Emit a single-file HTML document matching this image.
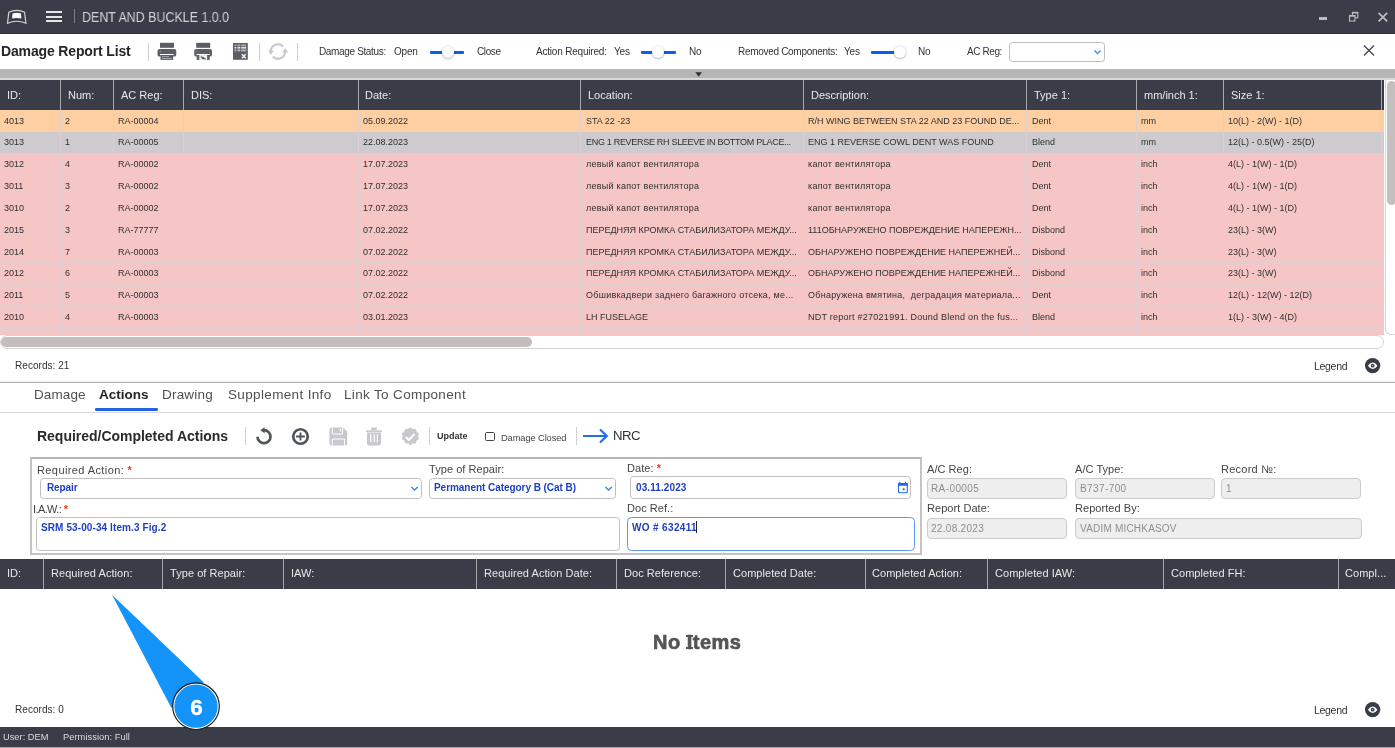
<!DOCTYPE html><html><head><meta charset="utf-8"><style>
*{box-sizing:border-box;margin:0;padding:0}
html,body{width:1395px;height:748px;overflow:hidden;background:#fff;font-family:"Liberation Sans",sans-serif;color:#333}
.a,.hc,.c,.lbl{will-change:transform}
.a{position:absolute;white-space:nowrap}
svg{position:absolute;overflow:visible}
.hc{position:absolute;height:30px;line-height:30px;font-size:11px;color:#e8e8e8;white-space:nowrap}
.hd{position:absolute;width:1px;background:#a9a6ab}
.c{position:absolute;font-size:9px;color:#2f2f2f;white-space:nowrap;line-height:12px}
.lbl{position:absolute;font-size:11px;color:#444;white-space:nowrap;line-height:13px}
.st{color:#f03a17;font-weight:bold}
</style></head><body>
<div class="a" style="left:0;top:0;width:1395px;height:34px;background:#3a3d47"></div>
<div class="a" style="left:0;top:33px;width:1395px;height:1px;background:#2d2f37"></div>
<svg style="left:0;top:0" width="40" height="33"><path d="M7.5 23.3 L8.8 12.3 Q16.7 8.4 24.6 12.3 L25.9 23.3 Q16.7 19.2 7.5 23.3Z" fill="none" stroke="#d6d6d6" stroke-width="1.2"/><path d="M12 18.4 L12.5 13.6 Q16.7 12 21 13.6 L21.4 18.4 Q16.7 17.4 12 18.4Z" fill="#fafafa"/></svg>
<div class="a" style="left:46px;top:11px;width:16px;height:2px;background:#e6e6e6"></div>
<div class="a" style="left:46px;top:15.5px;width:16px;height:2px;background:#e6e6e6"></div>
<div class="a" style="left:46px;top:20px;width:16px;height:2px;background:#e6e6e6"></div>
<div class="a" style="left:74px;top:9px;width:1px;height:14px;background:#7a7c84"></div>
<div class="a" style="left:82.3px;top:8.5px;font-size:14.5px;line-height:17px;color:#cfd0d3;transform:scaleX(0.858);transform-origin:0 0">DENT AND BUCKLE 1.0.0</div>
<div class="a" style="left:1319px;top:17px;width:8px;height:3px;background:#bdbdbd"></div>
<svg style="left:1345px;top:8px" width="18" height="18"><rect x="7.4" y="4.4" width="5.4" height="5.4" fill="none" stroke="#bdbdbd" stroke-width="1.1"/><rect x="7" y="4" width="6.2" height="1.5" fill="#bdbdbd"/><rect x="4.5" y="7.6" width="5.4" height="5.4" fill="#3a3d47" stroke="#bdbdbd" stroke-width="1.1"/><rect x="4" y="7.2" width="6.4" height="1.5" fill="#bdbdbd"/></svg>
<svg style="left:1375px;top:8.5px" width="16" height="16"><path d="M3.6 3.9 L12.2 12.3 M12.2 3.9 L3.6 12.3" stroke="#bdbdbd" stroke-width="1.7"/></svg>
<div class="a" style="left:1px;top:41px;font-size:14px;font-weight:bold;line-height:20px;color:#262626;letter-spacing:-0.15px">Damage Report List</div>
<div class="a" style="left:148px;top:43px;width:1px;height:18px;background:#d0d0d4"></div>
<div class="a" style="left:259px;top:43px;width:1px;height:18px;background:#d0d0d4"></div>
<div class="a" style="left:296.5px;top:43px;width:1px;height:18px;background:#d0d0d4"></div>
<svg style="left:157px;top:42px" width="22" height="20"><rect x="3" y="0.8" width="14" height="5" fill="#5b5e66"/><rect x="0.5" y="6.9" width="18.8" height="7.7" rx="2.2" fill="#5b5e66"/><rect x="3" y="12" width="13.5" height="1.1" fill="#fff"/><rect x="3.5" y="13.1" width="12.7" height="4.8" fill="#5b5e66"/><rect x="5" y="14.3" width="7" height="0.8" fill="#b4b4b8"/><rect x="5" y="16.2" width="10" height="0.8" fill="#b4b4b8"/><rect x="2.6" y="8.8" width="1.4" height="0.8" fill="#9a9ca2"/></svg>
<svg style="left:194px;top:42px" width="22" height="20"><rect x="2.2" y="0.8" width="14" height="5" fill="#5b5e66"/><rect x="0.2" y="6.9" width="17.8" height="7.7" rx="2.2" fill="#5b5e66"/><rect x="2.5" y="12" width="13.3" height="1.1" fill="#fff"/><rect x="2.7" y="13.1" width="13" height="4.8" fill="#5b5e66"/><rect x="5.3" y="13.1" width="7.8" height="4.8" fill="#f4f4f6"/><path d="M6.3 14 L10.5 15.5 L12.5 17.5 L8 17 Z" fill="#5b5e66"/><rect x="2.2" y="8.8" width="1.4" height="0.8" fill="#9a9ca2"/></svg>
<svg style="left:232px;top:42px" width="18" height="20"><rect x="1" y="1" width="14.8" height="16.8" fill="#5b5e66"/><rect x="2.5" y="2.4" width="1.8" height="1.8" fill="#a9abb0"/><rect x="5.3" y="2.4" width="3.0" height="1.8" fill="#a9abb0"/><rect x="9.2" y="2.4" width="5.0" height="1.8" fill="#a9abb0"/><rect x="2.5" y="4.9" width="1.8" height="1.7" fill="#dedfe2"/><rect x="5.3" y="4.9" width="3.0" height="1.7" fill="#dedfe2"/><rect x="9.2" y="4.9" width="5.0" height="1.7" fill="#dedfe2"/><rect x="2.5" y="7.4" width="1.8" height="2.0" fill="#b4b6bb"/><rect x="5.3" y="7.4" width="3.0" height="2.0" fill="#b4b6bb"/><rect x="9.2" y="7.4" width="5.0" height="2.0" fill="#b4b6bb"/><path d="M9.8 12.3 L13.8 16.3 M13.6 12.3 L10 16.3" stroke="#f0f0f2" stroke-width="1.5"/></svg>
<svg style="left:267px;top:42px" width="22" height="20"><path d="M16.1 4.4 A7.2 7.2 0 0 0 3.8 9.2" fill="none" stroke="#c9c9cf" stroke-width="2.2"/><path d="M5.9 14.6 A7.2 7.2 0 0 0 18.2 9.8" fill="none" stroke="#c9c9cf" stroke-width="2.2"/><path d="M0.9 8.6 L6.9 8.6 L3.9 12.9Z" fill="#c9c9cf"/><path d="M15.2 10.4 L21.2 10.4 L18.2 6.1Z" fill="#c9c9cf"/></svg>
<div class="a" style="left:319.3px;top:46.3px;font-size:10px;line-height:12px;color:#333;letter-spacing:-0.35px">Damage Status:</div>
<div class="a" style="left:393.9px;top:46.3px;font-size:10px;line-height:12px;color:#333;letter-spacing:-0.2px">Open</div>
<div class="a" style="left:430.4px;top:50.5px;width:34.400000000000034px;height:2.7px;background:#0b5cf0;border-radius:1px"></div><div class="a" style="left:441.55px;top:46.05px;width:11.5px;height:11.5px;border-radius:50%;background:#fdfcfe;box-shadow:0 0.6px 2px rgba(0,0,0,0.38)"></div>
<div class="a" style="left:477px;top:46.3px;font-size:10px;line-height:12px;color:#333;letter-spacing:-0.4px">Close</div>
<div class="a" style="left:535.8px;top:46.3px;font-size:10px;line-height:12px;color:#333;letter-spacing:-0.2px">Action Required:</div>
<div class="a" style="left:613.9px;top:46.3px;font-size:10px;line-height:12px;color:#333;letter-spacing:-0.2px">Yes</div>
<div class="a" style="left:641.1px;top:50.5px;width:34.5px;height:2.7px;background:#0b5cf0;border-radius:1px"></div><div class="a" style="left:652.15px;top:46.05px;width:11.5px;height:11.5px;border-radius:50%;background:#fdfcfe;box-shadow:0 0.6px 2px rgba(0,0,0,0.38)"></div>
<div class="a" style="left:688.5px;top:46.3px;font-size:10px;line-height:12px;color:#333;letter-spacing:-0.2px">No</div>
<div class="a" style="left:737.5px;top:46.3px;font-size:10px;line-height:12px;color:#333;letter-spacing:-0.3px">Removed Components:</div>
<div class="a" style="left:844.4px;top:46.3px;font-size:10px;line-height:12px;color:#333;letter-spacing:-0.2px">Yes</div>
<div class="a" style="left:871.2px;top:50.5px;width:25.799999999999955px;height:2.7px;background:#0b5cf0;border-radius:1px"></div><div class="a" style="left:893.85px;top:46.05px;width:11.5px;height:11.5px;border-radius:50%;background:#fdfcfe;box-shadow:0 0.6px 2px rgba(0,0,0,0.38)"></div>
<div class="a" style="left:918.3px;top:46.3px;font-size:10px;line-height:12px;color:#333;letter-spacing:-0.2px">No</div>
<div class="a" style="left:967px;top:46.3px;font-size:10px;line-height:12px;color:#333;letter-spacing:-0.4px">AC Reg:</div>
<div class="a" style="left:1009px;top:42px;width:96px;height:20px;border:1px solid #c2bbbb;border-radius:3.5px;background:#fff"></div>
<svg style="left:1093px;top:48px" width="10" height="8"><path d="M1.5 2.5 L4.5 5.6 L7.5 2.5" fill="none" stroke="#3f80ee" stroke-width="1.3"/></svg>
<svg style="left:1361px;top:43px" width="16" height="16"><path d="M3 2.5 L13 12.5 M13 2.5 L3 12.5" stroke="#4a4a4a" stroke-width="1.4"/></svg>
<div class="a" style="left:0;top:69px;width:1395px;height:9px;background:#b6b6b6"></div>
<div class="a" style="left:0;top:78px;width:1395px;height:2px;background:#ddd8d8"></div>
<svg style="left:694px;top:71px" width="10" height="8"><path d="M1.3 1.3 L8 1.3 L4.65 5.8Z" fill="#333"/></svg>
<div class="a" style="left:0;top:80px;width:1384px;height:30px;background:#3a3d47"></div>
<div class="hc" style="left:6.9px;top:80px">ID:</div>
<div class="hd" style="left:60px;top:80px;height:30px"></div>
<div class="hc" style="left:67.8px;top:80px">Num:</div>
<div class="hd" style="left:113px;top:80px;height:30px"></div>
<div class="hc" style="left:120.8px;top:80px">AC Reg:</div>
<div class="hd" style="left:182.8px;top:80px;height:30px"></div>
<div class="hc" style="left:190.60000000000002px;top:80px">DIS:</div>
<div class="hd" style="left:357.5px;top:80px;height:30px"></div>
<div class="hc" style="left:365.3px;top:80px">Date:</div>
<div class="hd" style="left:580.4px;top:80px;height:30px"></div>
<div class="hc" style="left:588.1999999999999px;top:80px">Location:</div>
<div class="hd" style="left:803px;top:80px;height:30px"></div>
<div class="hc" style="left:810.8px;top:80px">Description:</div>
<div class="hd" style="left:1026.3px;top:80px;height:30px"></div>
<div class="hc" style="left:1034.1px;top:80px">Type 1:</div>
<div class="hd" style="left:1135.8px;top:80px;height:30px"></div>
<div class="hc" style="left:1143.6px;top:80px">mm/inch 1:</div>
<div class="hd" style="left:1223.2px;top:80px;height:30px"></div>
<div class="hc" style="left:1231.0px;top:80px">Size 1:</div>
<div class="hd" style="left:1380.8px;top:80px;height:30px"></div>
<div class="a" style="left:0;top:328.4px;width:1384px;height:6.600000000000023px;background:#f6c6c6"></div>
<div class="a" style="left:0;top:110.0px;width:1384px;height:21.84px;background:#fecfa3"></div>
<div class="a" style="left:0;top:131.84px;width:1384px;height:21.84px;background:#cdcbce"></div>
<div class="a" style="left:0;top:153.68px;width:1384px;height:21.84px;background:#f6c6c6"></div>
<div class="a" style="left:0;top:175.51999999999998px;width:1384px;height:21.84px;background:#f6c6c6"></div>
<div class="a" style="left:0;top:197.36px;width:1384px;height:21.84px;background:#f6c6c6"></div>
<div class="a" style="left:0;top:219.2px;width:1384px;height:21.84px;background:#f6c6c6"></div>
<div class="a" style="left:0;top:241.04px;width:1384px;height:21.84px;background:#f6c6c6"></div>
<div class="a" style="left:0;top:262.88px;width:1384px;height:21.84px;background:#f6c6c6"></div>
<div class="a" style="left:0;top:284.72px;width:1384px;height:21.84px;background:#f6c6c6"></div>
<div class="a" style="left:0;top:306.56px;width:1384px;height:21.84px;background:#f6c6c6"></div>
<div class="a" style="left:0;top:153.18px;width:1384px;height:1px;background:#ddcfd0"></div>
<div class="a" style="left:0;top:175.01999999999998px;width:1384px;height:1px;background:#ddcfd0"></div>
<div class="a" style="left:0;top:196.86px;width:1384px;height:1px;background:#ddcfd0"></div>
<div class="a" style="left:0;top:218.7px;width:1384px;height:1px;background:#ddcfd0"></div>
<div class="a" style="left:0;top:240.54px;width:1384px;height:1px;background:#ddcfd0"></div>
<div class="a" style="left:0;top:262.38px;width:1384px;height:1px;background:#ddcfd0"></div>
<div class="a" style="left:0;top:284.22px;width:1384px;height:1px;background:#ddcfd0"></div>
<div class="a" style="left:0;top:306.06px;width:1384px;height:1px;background:#ddcfd0"></div>
<div class="a" style="left:0;top:327.9px;width:1384px;height:1px;background:#ddcfd0"></div>
<div class="a" style="left:60px;top:110px;width:1px;height:224.8px;background:#dcd0d1"></div>
<div class="a" style="left:113px;top:110px;width:1px;height:224.8px;background:#dcd0d1"></div>
<div class="a" style="left:182.8px;top:110px;width:1px;height:224.8px;background:#dcd0d1"></div>
<div class="a" style="left:357.5px;top:110px;width:1px;height:224.8px;background:#dcd0d1"></div>
<div class="a" style="left:580.4px;top:110px;width:1px;height:224.8px;background:#dcd0d1"></div>
<div class="a" style="left:803px;top:110px;width:1px;height:224.8px;background:#dcd0d1"></div>
<div class="a" style="left:1026.3px;top:110px;width:1px;height:224.8px;background:#dcd0d1"></div>
<div class="a" style="left:1135.8px;top:110px;width:1px;height:224.8px;background:#dcd0d1"></div>
<div class="a" style="left:1223.2px;top:110px;width:1px;height:224.8px;background:#dcd0d1"></div>
<div class="a" style="left:1380.8px;top:110px;width:1px;height:224.8px;background:#dcd0d1"></div>
<div class="c" style="left:4px;top:114.5px;">4013</div>
<div class="c" style="left:65.2px;top:114.5px;">2</div>
<div class="c" style="left:118.2px;top:114.5px;">RA-00004</div>
<div class="c" style="left:362.7px;top:114.5px;">05.09.2022</div>
<div class="c" style="left:585.6px;top:114.5px;">STA 22 -23</div>
<div class="c" style="left:808.2px;top:114.5px;">R/H WING BETWEEN STA 22 AND 23 FOUND DE...</div>
<div class="c" style="left:1031.5px;top:114.5px;">Dent</div>
<div class="c" style="left:1141.0px;top:114.5px;">mm</div>
<div class="c" style="left:1228.4px;top:114.5px;">10(L) - 2(W) - 1(D)</div>
<div class="c" style="left:4px;top:136.34px;">3013</div>
<div class="c" style="left:65.2px;top:136.34px;">1</div>
<div class="c" style="left:118.2px;top:136.34px;">RA-00005</div>
<div class="c" style="left:362.7px;top:136.34px;">22.08.2023</div>
<div class="c" style="left:585.6px;top:136.34px;letter-spacing:-0.3px;">ENG 1 REVERSE RH SLEEVE IN BOTTOM PLACE...</div>
<div class="c" style="left:808.2px;top:136.34px;">ENG 1 REVERSE COWL DENT WAS FOUND</div>
<div class="c" style="left:1031.5px;top:136.34px;">Blend</div>
<div class="c" style="left:1141.0px;top:136.34px;">mm</div>
<div class="c" style="left:1228.4px;top:136.34px;">12(L) - 0.5(W) - 25(D)</div>
<div class="c" style="left:4px;top:158.18px;">3012</div>
<div class="c" style="left:65.2px;top:158.18px;">4</div>
<div class="c" style="left:118.2px;top:158.18px;">RA-00002</div>
<div class="c" style="left:362.7px;top:158.18px;">17.07.2023</div>
<div class="c" style="left:585.6px;top:158.18px;letter-spacing:0.25px;">левый капот вентилятора</div>
<div class="c" style="left:808.2px;top:158.18px;letter-spacing:0.25px;">капот вентилятора</div>
<div class="c" style="left:1031.5px;top:158.18px;">Dent</div>
<div class="c" style="left:1141.0px;top:158.18px;">inch</div>
<div class="c" style="left:1228.4px;top:158.18px;">4(L) - 1(W) - 1(D)</div>
<div class="c" style="left:4px;top:180.01999999999998px;">3011</div>
<div class="c" style="left:65.2px;top:180.01999999999998px;">3</div>
<div class="c" style="left:118.2px;top:180.01999999999998px;">RA-00002</div>
<div class="c" style="left:362.7px;top:180.01999999999998px;">17.07.2023</div>
<div class="c" style="left:585.6px;top:180.01999999999998px;letter-spacing:0.25px;">левый капот вентилятора</div>
<div class="c" style="left:808.2px;top:180.01999999999998px;letter-spacing:0.25px;">капот вентилятора</div>
<div class="c" style="left:1031.5px;top:180.01999999999998px;">Dent</div>
<div class="c" style="left:1141.0px;top:180.01999999999998px;">inch</div>
<div class="c" style="left:1228.4px;top:180.01999999999998px;">4(L) - 1(W) - 1(D)</div>
<div class="c" style="left:4px;top:201.86px;">3010</div>
<div class="c" style="left:65.2px;top:201.86px;">2</div>
<div class="c" style="left:118.2px;top:201.86px;">RA-00002</div>
<div class="c" style="left:362.7px;top:201.86px;">17.07.2023</div>
<div class="c" style="left:585.6px;top:201.86px;letter-spacing:0.25px;">левый капот вентилятора</div>
<div class="c" style="left:808.2px;top:201.86px;letter-spacing:0.25px;">капот вентилятора</div>
<div class="c" style="left:1031.5px;top:201.86px;">Dent</div>
<div class="c" style="left:1141.0px;top:201.86px;">inch</div>
<div class="c" style="left:1228.4px;top:201.86px;">4(L) - 1(W) - 1(D)</div>
<div class="c" style="left:4px;top:223.7px;">2015</div>
<div class="c" style="left:65.2px;top:223.7px;">3</div>
<div class="c" style="left:118.2px;top:223.7px;">RA-77777</div>
<div class="c" style="left:362.7px;top:223.7px;">07.02.2022</div>
<div class="c" style="left:585.6px;top:223.7px;">ПЕРЕДНЯЯ КРОМКА СТАБИЛИЗАТОРА МЕЖДУ...</div>
<div class="c" style="left:808.2px;top:223.7px;">111ОБНАРУЖЕНО ПОВРЕЖДЕНИЕ НАПЕРЕЖН...</div>
<div class="c" style="left:1031.5px;top:223.7px;">Disbond</div>
<div class="c" style="left:1141.0px;top:223.7px;">inch</div>
<div class="c" style="left:1228.4px;top:223.7px;">23(L) - 3(W)</div>
<div class="c" style="left:4px;top:245.54px;">2014</div>
<div class="c" style="left:65.2px;top:245.54px;">7</div>
<div class="c" style="left:118.2px;top:245.54px;">RA-00003</div>
<div class="c" style="left:362.7px;top:245.54px;">07.02.2022</div>
<div class="c" style="left:585.6px;top:245.54px;">ПЕРЕДНЯЯ КРОМКА СТАБИЛИЗАТОРА МЕЖДУ...</div>
<div class="c" style="left:808.2px;top:245.54px;">ОБНАРУЖЕНО ПОВРЕЖДЕНИЕ НАПЕРЕЖНЕЙ...</div>
<div class="c" style="left:1031.5px;top:245.54px;">Disbond</div>
<div class="c" style="left:1141.0px;top:245.54px;">inch</div>
<div class="c" style="left:1228.4px;top:245.54px;">23(L) - 3(W)</div>
<div class="c" style="left:4px;top:267.38px;">2012</div>
<div class="c" style="left:65.2px;top:267.38px;">6</div>
<div class="c" style="left:118.2px;top:267.38px;">RA-00003</div>
<div class="c" style="left:362.7px;top:267.38px;">07.02.2022</div>
<div class="c" style="left:585.6px;top:267.38px;">ПЕРЕДНЯЯ КРОМКА СТАБИЛИЗАТОРА МЕЖДУ...</div>
<div class="c" style="left:808.2px;top:267.38px;">ОБНАРУЖЕНО ПОВРЕЖДЕНИЕ НАПЕРЕЖНЕЙ...</div>
<div class="c" style="left:1031.5px;top:267.38px;">Disbond</div>
<div class="c" style="left:1141.0px;top:267.38px;">inch</div>
<div class="c" style="left:1228.4px;top:267.38px;">23(L) - 3(W)</div>
<div class="c" style="left:4px;top:289.22px;">2011</div>
<div class="c" style="left:65.2px;top:289.22px;">5</div>
<div class="c" style="left:118.2px;top:289.22px;">RA-00003</div>
<div class="c" style="left:362.7px;top:289.22px;">07.02.2022</div>
<div class="c" style="left:585.6px;top:289.22px;letter-spacing:0.25px;">Обшивкадвери заднего багажного отсека, ме...</div>
<div class="c" style="left:808.2px;top:289.22px;letter-spacing:0.25px;">Обнаружена вмятина,&nbsp; деградация материала...</div>
<div class="c" style="left:1031.5px;top:289.22px;">Dent</div>
<div class="c" style="left:1141.0px;top:289.22px;">inch</div>
<div class="c" style="left:1228.4px;top:289.22px;">12(L) - 12(W) - 12(D)</div>
<div class="c" style="left:4px;top:311.06px;">2010</div>
<div class="c" style="left:65.2px;top:311.06px;">4</div>
<div class="c" style="left:118.2px;top:311.06px;">RA-00003</div>
<div class="c" style="left:362.7px;top:311.06px;">03.01.2023</div>
<div class="c" style="left:585.6px;top:311.06px;">LH FUSELAGE</div>
<div class="c" style="left:808.2px;top:311.06px;letter-spacing:0.25px;">NDT report #27021991. Dound Blend on the fus...</div>
<div class="c" style="left:1031.5px;top:311.06px;">Blend</div>
<div class="c" style="left:1141.0px;top:311.06px;">inch</div>
<div class="c" style="left:1228.4px;top:311.06px;">1(L) - 3(W) - 4(D)</div>
<div class="a" style="left:1385px;top:80px;width:10px;height:255px;border-left:1px solid #d8d4d4;border-bottom:1px solid #d8d4d4;border-bottom-left-radius:6px;background:#fff"></div>
<div class="a" style="left:1386.5px;top:80.6px;width:9px;height:123.5px;border-radius:4.5px;background:#c6bfbf"></div>
<div class="a" style="left:0;top:335px;width:1384px;height:14px;border:1px solid #d8d3d3;border-radius:7px;background:#fff"></div>
<div class="a" style="left:0.5px;top:336.5px;width:531px;height:10.3px;border-radius:5.15px;background:#c5bdbd"></div>
<div class="a" style="left:15px;top:359.5px;font-size:10px;line-height:12px;color:#333;letter-spacing:0.05px">Records: 21</div>
<div class="a" style="left:1313.5px;top:360.09999999999997px;font-size:10.5px;line-height:13px;color:#333;letter-spacing:-0.3px">Legend</div><svg style="left:1364px;top:356.5px" width="18" height="18"><circle cx="8.6" cy="8.6" r="7.7" fill="#3a3d47"/><path d="M3.9 8.7 Q8.7 2.1 13.5 8.7 Q8.7 15.3 3.9 8.7Z" fill="#fff"/><circle cx="8.7" cy="8.7" r="1.9" fill="#3a3d47"/><circle cx="8.7" cy="8.7" r="0.6" fill="#c8c8cc"/></svg>
<div class="a" style="left:0;top:380px;width:1395px;height:2px;background:linear-gradient(#fff,#f0eeee)"></div>
<div class="a" style="left:0;top:382px;width:1395px;height:1px;background:#b2b0b0"></div>
<div class="a" style="left:33.9px;top:387px;font-size:13.5px;line-height:16px;font-weight:400;color:#505050;letter-spacing:0.1px">Damage</div>
<div class="a" style="left:98.9px;top:387px;font-size:13.5px;line-height:16px;font-weight:700;color:#262626">Actions</div>
<div class="a" style="left:162px;top:387px;font-size:13.5px;line-height:16px;font-weight:400;color:#505050;letter-spacing:0.2px">Drawing</div>
<div class="a" style="left:227.7px;top:387px;font-size:13.5px;line-height:16px;font-weight:400;color:#505050;letter-spacing:0.35px">Supplement Info</div>
<div class="a" style="left:344.2px;top:387px;font-size:13.5px;line-height:16px;font-weight:400;color:#505050;letter-spacing:0.35px">Link To Component</div>
<div class="a" style="left:95.4px;top:408.2px;width:62.6px;height:2.6px;border-radius:1.3px;background:#2064e0"></div>
<div class="a" style="left:0;top:411.5px;width:1395px;height:1px;background:#ddd6d6"></div>
<div class="a" style="left:37.3px;top:427.7px;font-size:14px;line-height:17px;font-weight:bold;color:#2a2a2a;letter-spacing:-0.02px">Required/Completed Actions</div>
<div class="a" style="left:245px;top:427px;width:1px;height:18px;background:#d0d0d4"></div>
<div class="a" style="left:429.3px;top:427px;width:1px;height:18px;background:#d0d0d4"></div>
<div class="a" style="left:575.5px;top:427px;width:1px;height:18px;background:#d0d0d4"></div>
<svg style="left:254px;top:426px" width="20" height="20"><path d="M3.5 10.7 A6.5 6.5 0 1 0 10 4.2" fill="none" stroke="#50535b" stroke-width="2.7"/><path d="M6.3 4.2 L10.6 1.2 L10.6 7.2Z" fill="#50535b"/></svg>
<svg style="left:291px;top:426.5px" width="20" height="20"><circle cx="9.5" cy="9.5" r="7.25" fill="none" stroke="#50535b" stroke-width="2.7"/><path d="M9.5 5.5 V13.6 M5.1 9.5 H13.8" stroke="#50535b" stroke-width="1.8"/></svg>
<svg style="left:328.5px;top:426.5px" width="20" height="20"><path d="M0.5 2.5 Q0.5 0.6 2.4 0.6 L14 0.6 L18.2 4.6 L18.2 16.5 Q18.2 18.4 16.3 18.4 L2.4 18.4 Q0.5 18.4 0.5 16.5Z" fill="#c8c8cf"/><path d="M3.3 0.6 V7 H13.5 V0.6" fill="none" stroke="#fff" stroke-width="1"/><rect x="11" y="1.6" width="1" height="3" fill="#fff"/><path d="M3.3 18.4 V12 H15.5 V18.4" fill="none" stroke="#fff" stroke-width="1"/></svg>
<svg style="left:365px;top:426.5px" width="18" height="20"><rect x="1" y="3.4" width="16" height="1.6" fill="#c8c8cf"/><rect x="6.2" y="0.6" width="5.6" height="3" rx="0.5" fill="#c8c8cf"/><path d="M2 5.6 L16 5.6 L16 16.6 Q16 18.4 14.2 18.4 L3.8 18.4 Q2 18.4 2 16.6Z" fill="#c8c8cf"/><rect x="5.1" y="7.2" width="1.2" height="8" fill="#fff"/><rect x="8.6" y="7.2" width="1.2" height="8" fill="#fff"/><rect x="11.8" y="7.2" width="1.2" height="8" fill="#fff"/></svg>
<svg style="left:401px;top:426.5px" width="20" height="20"><path d="M9.40 0.90 L11.56 2.54 L14.28 2.49 L15.06 5.09 L17.29 6.64 L16.40 9.20 L17.29 11.76 L15.06 13.31 L14.28 15.91 L11.56 15.86 L9.40 17.50 L7.24 15.86 L4.52 15.91 L3.74 13.31 L1.51 11.76 L2.40 9.20 L1.51 6.64 L3.74 5.09 L4.52 2.49 L7.24 2.54Z" fill="#c8c8cf" stroke="#c8c8cf" stroke-width="1.2" stroke-linejoin="round"/><path d="M4.8 10 L8 13 L13.6 6.8" fill="none" stroke="#fff" stroke-width="2"/></svg>
<div class="a" style="left:436.6px;top:431px;font-size:9px;line-height:11px;font-weight:bold;color:#333;letter-spacing:0px">Update</div>
<div class="a" style="left:485px;top:432.4px;width:9.8px;height:9.3px;border:1.3px solid #444;border-radius:1.5px"></div>
<div class="a" style="left:500.5px;top:431.8px;font-size:9.3px;line-height:12px;color:#444;letter-spacing:-0.1px">Damage Closed</div>
<svg style="left:582px;top:428px" width="28" height="16"><path d="M1 8 H24.5 M18 1.5 L24.8 8 L18 14.5" fill="none" stroke="#1f6fe8" stroke-width="2.2"/></svg>
<div class="a" style="left:613px;top:427.8px;font-size:13.2px;line-height:15px;color:#333;letter-spacing:-0.5px">NRC</div>
<div class="a" style="left:29.5px;top:457px;width:892px;height:98px;border:2px solid #c9c2c2;border-top-color:#bdb5b5;background:#fff"></div>
<div class="lbl" style="left:37px;top:463.8px;font-size:11px;letter-spacing:0.4px">Required Action: <span class="st">*</span></div>
<div class="lbl" style="left:429.4px;top:463.0px;font-size:11px;letter-spacing:0.05px">Type of Repair:</div>
<div class="lbl" style="left:626.9px;top:462.2px;font-size:11px;letter-spacing:0.05px">Date: <span class="st">*</span></div>
<div class="lbl" style="left:33.3px;top:503.3px;font-size:11px;letter-spacing:-0.6px">I.A.W.: <span class="st">*</span></div>
<div class="lbl" style="left:626.9px;top:502.3px;font-size:11px;letter-spacing:0.05px">Doc Ref.:</div>
<div class="a" style="left:40px;top:478px;width:382px;height:21px;border:1px solid #c4bdbd;border-radius:3.5px;background:#fff"></div>
<div class="a" style="left:429px;top:478px;width:187px;height:21px;border:1px solid #c4bdbd;border-radius:3.5px;background:#fff"></div>
<div class="a" style="left:630px;top:476px;width:281px;height:23px;border:1px solid #c4bdbd;border-radius:3.5px;background:#fff"></div>
<div class="a" style="left:36px;top:517px;width:584px;height:34px;border:1px solid #c4bdbd;border-radius:3.5px;background:#fff"></div>
<div class="a" style="left:626.9px;top:517.4px;width:287.70000000000005px;height:33.80000000000007px;border:1.4px solid #5f96f3;border-radius:4.5px;background:#fff"></div>
<div class="a" style="left:46.6px;top:481.7px;font-size:10px;line-height:12px;font-weight:700;color:#1d3fc3;letter-spacing:-0.1px">Repair</div>
<div class="a" style="left:433.7px;top:481.7px;font-size:10px;line-height:12px;font-weight:700;color:#1d3fc3;letter-spacing:-0.05px">Permanent Category B (Cat B)</div>
<div class="a" style="left:636.1px;top:482.0px;font-size:10px;line-height:12px;font-weight:700;color:#1d3fc3;letter-spacing:0.1px">03.11.2023</div>
<div class="a" style="left:41px;top:521.9000000000001px;font-size:10px;line-height:12px;font-weight:700;color:#1d3fc3;letter-spacing:0.1px">SRM 53-00-34 Item.3 Fig.2</div>
<div class="a" style="left:631.5px;top:521.7px;font-size:10px;line-height:12px;font-weight:700;color:#1d3fc3;letter-spacing:0.35px">WO # 632411</div>
<div class="a" style="left:696px;top:521px;width:1px;height:12px;background:#222"></div>
<svg style="left:409.7px;top:485px" width="10" height="8"><path d="M1.4 1.9 L4.6 5 L7.8 1.9" fill="none" stroke="#3f80ee" stroke-width="1.35"/></svg>
<svg style="left:603.7px;top:485px" width="10" height="8"><path d="M1.4 1.9 L4.6 5 L7.8 1.9" fill="none" stroke="#3f80ee" stroke-width="1.35"/></svg>
<svg style="left:897px;top:481px" width="12" height="13"><rect x="1.5" y="2.5" width="8.8" height="9.3" rx="1" fill="none" stroke="#1f66ee" stroke-width="1.1"/><rect x="1" y="2" width="9.8" height="2.8" rx="0.8" fill="#1f66ee"/><rect x="2.3" y="0.8" width="1.1" height="2" fill="#1f66ee"/><rect x="7.9" y="0.8" width="1.1" height="2" fill="#1f66ee"/><circle cx="6.7" cy="8.3" r="1.15" fill="#1f66ee"/></svg>
<div class="lbl" style="left:927px;top:462.5px;font-size:11px;letter-spacing:0.05px">A/C Reg:</div>
<div class="lbl" style="left:1074.7px;top:462.5px;font-size:11px;letter-spacing:0.05px">A/C Type:</div>
<div class="lbl" style="left:1221.1px;top:462.5px;font-size:11px;letter-spacing:0.25px">Record №:</div>
<div class="lbl" style="left:927px;top:502.0px;font-size:11px;letter-spacing:0.05px">Report Date:</div>
<div class="lbl" style="left:1074.7px;top:502.0px;font-size:11px;letter-spacing:0.05px">Reported By:</div>
<div class="a" style="left:926.7px;top:478.2px;width:140.0px;height:21.19999999999999px;border:1px solid #cfcaca;border-radius:4px;background:#eeeeee"></div>
<div class="a" style="left:1074.7px;top:478.2px;width:140.0px;height:21.19999999999999px;border:1px solid #cfcaca;border-radius:4px;background:#eeeeee"></div>
<div class="a" style="left:1221.1px;top:478.2px;width:140.20000000000005px;height:21.19999999999999px;border:1px solid #cfcaca;border-radius:4px;background:#eeeeee"></div>
<div class="a" style="left:926.7px;top:518.3px;width:140.0px;height:21.300000000000068px;border:1px solid #cfcaca;border-radius:4px;background:#eeeeee"></div>
<div class="a" style="left:1074.7px;top:518.3px;width:286.5999999999999px;height:21.300000000000068px;border:1px solid #cfcaca;border-radius:4px;background:#eeeeee"></div>
<div class="a" style="left:931.3px;top:483.2px;font-size:10px;line-height:12px;font-weight:400;color:#8e8e8e;letter-spacing:0.4px">RA-00005</div>
<div class="a" style="left:1079.5px;top:483.2px;font-size:10px;line-height:12px;font-weight:400;color:#8e8e8e;letter-spacing:0.4px">B737-700</div>
<div class="a" style="left:1226px;top:483.2px;font-size:10px;line-height:12px;font-weight:400;color:#8e8e8e;letter-spacing:0px">1</div>
<div class="a" style="left:931.3px;top:523.2px;font-size:10px;line-height:12px;font-weight:400;color:#8e8e8e;letter-spacing:0.3px">22.08.2023</div>
<div class="a" style="left:1079.5px;top:523.2px;font-size:10px;line-height:12px;font-weight:400;color:#8e8e8e;letter-spacing:0.2px">VADIM MICHKASOV</div>
<div class="a" style="left:0;top:559.2px;width:1395px;height:29.6px;background:#3a3d47"></div>
<div class="hc" style="left:6.9px;top:559.2px;height:29.6px;line-height:29.6px;letter-spacing:0.05px">ID:</div>
<div class="hd" style="left:43.1px;top:559.2px;height:29.6px"></div>
<div class="hc" style="left:50.9px;top:559.2px;height:29.6px;line-height:29.6px;letter-spacing:0.05px">Required Action:</div>
<div class="hd" style="left:161.7px;top:559.2px;height:29.6px"></div>
<div class="hc" style="left:169.5px;top:559.2px;height:29.6px;line-height:29.6px;letter-spacing:0.05px">Type of Repair:</div>
<div class="hd" style="left:283.3px;top:559.2px;height:29.6px"></div>
<div class="hc" style="left:291.1px;top:559.2px;height:29.6px;line-height:29.6px;letter-spacing:0.05px">IAW:</div>
<div class="hd" style="left:475.7px;top:559.2px;height:29.6px"></div>
<div class="hc" style="left:483.5px;top:559.2px;height:29.6px;line-height:29.6px;letter-spacing:0.05px">Required Action Date:</div>
<div class="hd" style="left:615.7px;top:559.2px;height:29.6px"></div>
<div class="hc" style="left:623.5px;top:559.2px;height:29.6px;line-height:29.6px;letter-spacing:0.05px">Doc Reference:</div>
<div class="hd" style="left:725px;top:559.2px;height:29.6px"></div>
<div class="hc" style="left:732.8px;top:559.2px;height:29.6px;line-height:29.6px;letter-spacing:0.05px">Completed Date:</div>
<div class="hd" style="left:864.6px;top:559.2px;height:29.6px"></div>
<div class="hc" style="left:872.4px;top:559.2px;height:29.6px;line-height:29.6px;letter-spacing:0.05px">Completed Action:</div>
<div class="hd" style="left:987.3px;top:559.2px;height:29.6px"></div>
<div class="hc" style="left:995.0999999999999px;top:559.2px;height:29.6px;line-height:29.6px;letter-spacing:0.05px">Completed IAW:</div>
<div class="hd" style="left:1163px;top:559.2px;height:29.6px"></div>
<div class="hc" style="left:1170.8px;top:559.2px;height:29.6px;line-height:29.6px;letter-spacing:0.05px">Completed FH:</div>
<div class="hd" style="left:1337.6px;top:559.2px;height:29.6px"></div>
<div class="hc" style="left:1345.3999999999999px;top:559.2px;height:29.6px;line-height:29.6px;letter-spacing:0.05px">Compl...</div>
<div class="a" style="left:653px;top:631px;font-size:20px;line-height:23px;font-weight:bold;color:#555;letter-spacing:0.5px;-webkit-text-stroke:0.7px #555">No Items</div>
<div class="a" style="left:686px;top:635.2px;width:7.2px;height:2.3px;background:#555"></div><div class="a" style="left:686px;top:646.9px;width:7.2px;height:2.3px;background:#555"></div>
<div class="a" style="left:15px;top:703.5px;font-size:10px;line-height:12px;color:#333;letter-spacing:0.05px">Records: 0</div>
<div class="a" style="left:1313.5px;top:704.1px;font-size:10.5px;line-height:13px;color:#333;letter-spacing:-0.3px">Legend</div><svg style="left:1364px;top:700.5px" width="18" height="18"><circle cx="8.6" cy="8.6" r="7.7" fill="#3a3d47"/><path d="M3.9 8.7 Q8.7 2.1 13.5 8.7 Q8.7 15.3 3.9 8.7Z" fill="#fff"/><circle cx="8.7" cy="8.7" r="1.9" fill="#3a3d47"/><circle cx="8.7" cy="8.7" r="0.6" fill="#c8c8cc"/></svg>
<div class="a" style="left:0;top:727px;width:1395px;height:20px;background:#3a3d47"></div>
<div class="a" style="left:0;top:747px;width:1395px;height:1px;background:#a8a8a8"></div>
<div class="a" style="left:3px;top:732px;font-size:9.3px;line-height:11px;color:#dcdcdc;letter-spacing:0px">User: DEM</div>
<div class="a" style="left:62.5px;top:732px;font-size:9.3px;line-height:11px;color:#dcdcdc;letter-spacing:0.05px">Permission: Full</div>
<svg style="left:0;top:0" width="1395" height="748"><path d="M112 594.7 L203.9 682.6 L171.4 707.9Z" fill="#1493f8"/><circle cx="196" cy="706.2" r="22.3" fill="#1493f8" stroke="#fff" stroke-width="1.4"/><circle cx="196" cy="706.2" r="23.3" fill="none" stroke="#1a1a1a" stroke-width="1.2"/><text x="196.4" y="715.3" text-anchor="middle" font-family="Liberation Sans" font-weight="bold" font-size="22.5" fill="#fff" stroke="#fff" stroke-width="0.4">6</text></svg>
</body></html>
